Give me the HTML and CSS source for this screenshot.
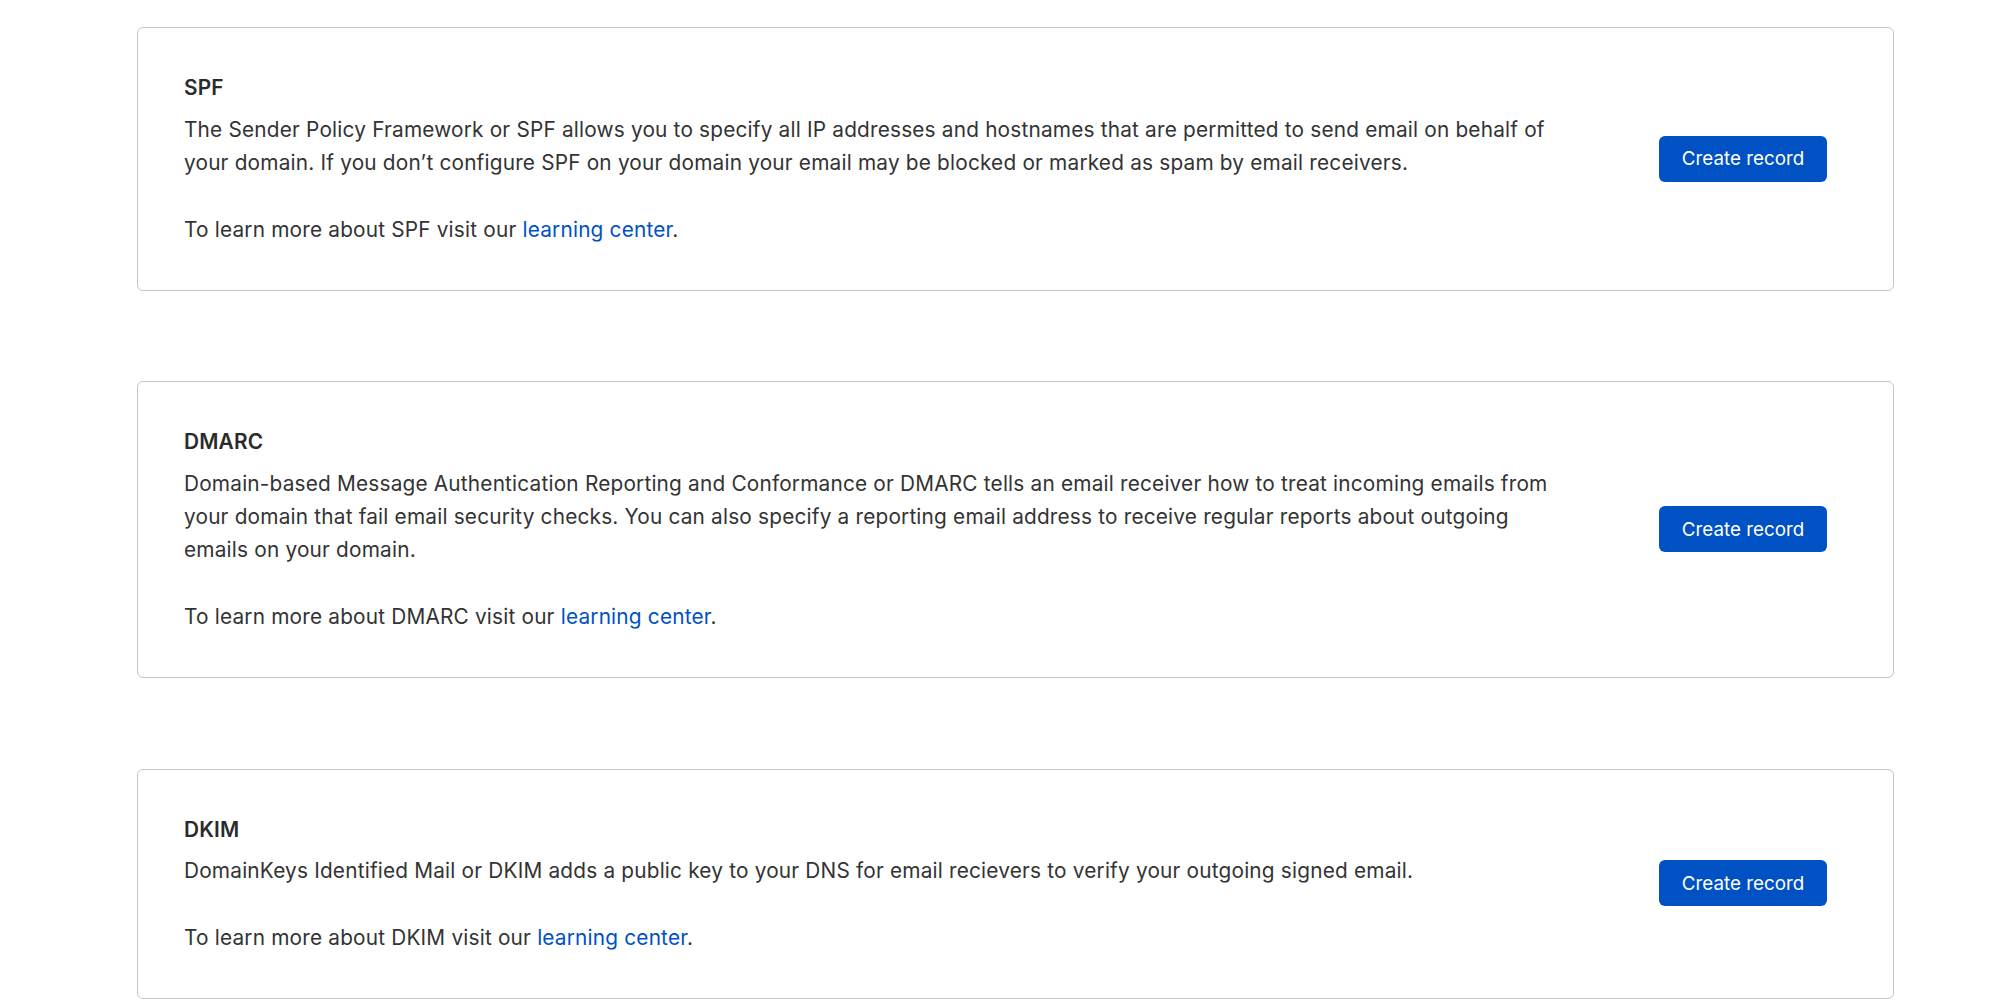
FILE: index.html
```html
<!DOCTYPE html>
<html lang="en">
<head>
<meta charset="utf-8">
<title>Email security records</title>
<link rel="stylesheet" href="styles.css">
</head>
<body>
<main class="page">
  <section class="card">
    <div class="content">
      <h3 class="title">SPF</h3>
      <p class="text">The Sender Policy Framework or SPF allows you to specify all IP addresses and hostnames that are permitted to send email on behalf of your domain. If you don’t configure SPF on your domain your email may be blocked or marked as spam by email receivers.</p>
      <p class="text more">To learn more about SPF visit our <a class="link" href="#">learning center</a>.</p>
    </div>
    <button class="btn" type="button">Create record</button>
  </section>
  <section class="card">
    <div class="content">
      <h3 class="title">DMARC</h3>
      <p class="text">Domain-based Message Authentication Reporting and Conformance or DMARC tells an email receiver how to treat incoming emails from your domain that fail email security checks. You can also specify a reporting email address to receive regular reports about outgoing emails on your domain.</p>
      <p class="text more">To learn more about DMARC visit our <a class="link" href="#">learning center</a>.</p>
    </div>
    <button class="btn" type="button">Create record</button>
  </section>
  <section class="card">
    <div class="content">
      <h3 class="title">DKIM</h3>
      <p class="text">DomainKeys Identified Mail or DKIM adds a public key to your DNS for email recievers to verify your outgoing signed email.</p>
      <p class="text more">To learn more about DKIM visit our <a class="link" href="#">learning center</a>.</p>
    </div>
    <button class="btn" type="button">Create record</button>
  </section>
</main>
</body>
</html>
```
FILE: styles.css
```css
* { box-sizing: border-box; }
html, body { margin: 0; padding: 0; background: #ffffff; }
body {
  font-family: Inter, "Noto Sans", "Liberation Sans", sans-serif;
  color: #333333;
}
.page {
  display: flex;
  flex-direction: column;
  gap: 90.5px;
  padding: 27.3px 0 0 137px;
}
.card {
  width: 1757px;
  border: 1px solid #c6c6c6;
  border-radius: 6px;
  padding: 43px 66px 43.5px 46px;
  display: flex;
  align-items: center;
  justify-content: space-between;
}
.content { width: 1378px; }
.title {
  margin: 0 0 8px;
  font-size: 20.8px;
  line-height: 33.3px;
  font-weight: 600;
  letter-spacing: 0.2px;
  color: #2b2b2b;
}
.text {
  margin: 0;
  font-size: 20.8px;
  line-height: 33.4px;
  letter-spacing: 0.19px;
}
.text.more { margin-top: 33.4px; }
.link { color: #0051c3; text-decoration: none; }
.btn {
  font-family: Inter, "Noto Sans", sans-serif;
  font-size: 18.8px;
  color: #ffffff;
  background: #0051c3;
  border: none;
  border-radius: 6px;
  width: 168px;
  height: 46px;
  padding: 0;
  cursor: pointer;
}
```
